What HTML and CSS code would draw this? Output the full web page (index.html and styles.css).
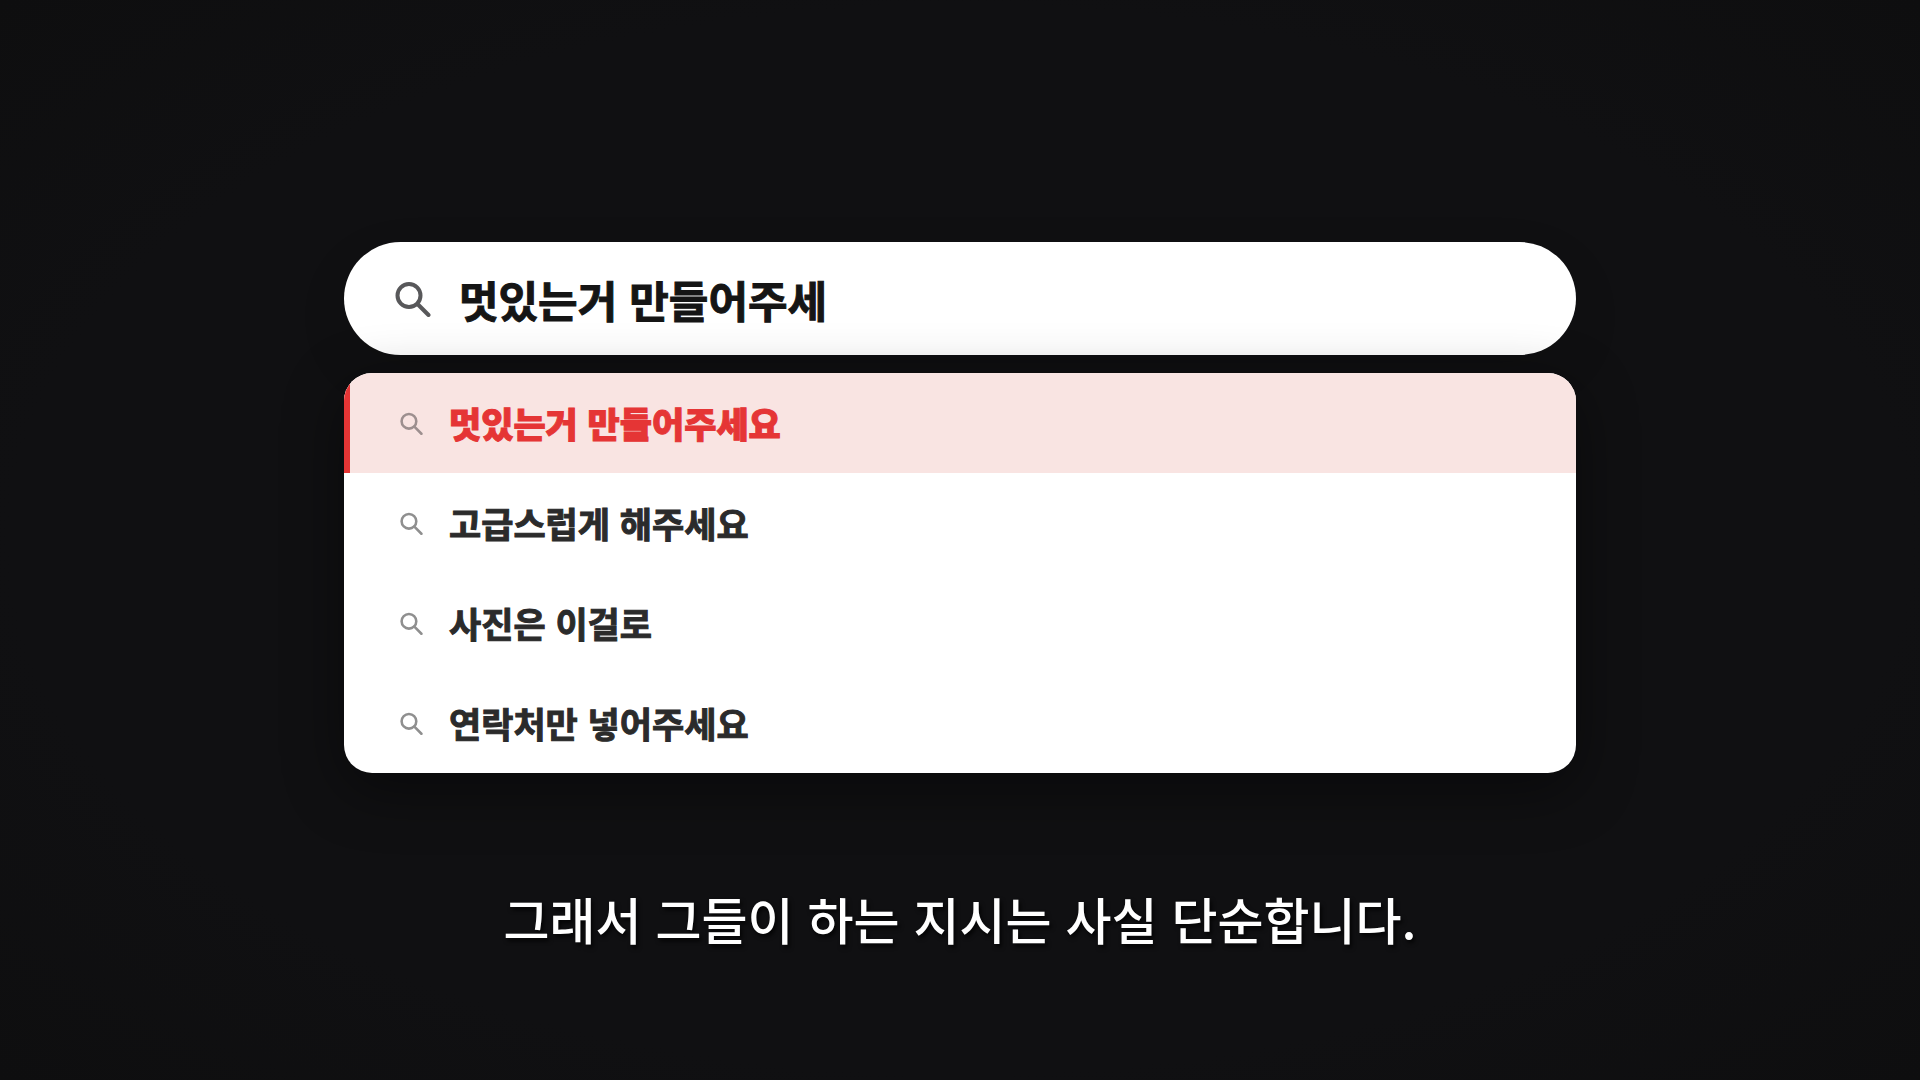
FILE: index.html
```html
<!DOCTYPE html>
<html lang="ko">
<head>
    <meta charset="UTF-8">
    <meta name="viewport" content="width=device-width, initial-scale=1.0">
    <title>검색</title>
    <link rel="stylesheet" href="styles.css">
</head>
<body>
    <svg class="sprite" aria-hidden="true">
        <symbol id="search-icon" viewBox="0 0 36 36">
            <circle cx="14" cy="14.5" r="11.5" fill="none" stroke="currentColor" stroke-width="4"/>
            <path d="M22.5 23L33.5 34" fill="none" stroke="currentColor" stroke-width="4" stroke-linecap="round"/>
        </symbol>
    </svg>
    <main class="search">
        <form class="search-bar">
            <label class="search-label" for="query" aria-label="검색">
                <svg class="icon"><use href="#search-icon"/></svg>
            </label>
            <input type="text" id="query" class="search-input" value="멋있는거 만들어주세" autocomplete="off">
        </form>
        <ul class="suggestions">
            <li>
                <button type="button" class="suggestion active">
                    <svg class="icon"><use href="#search-icon"/></svg>
                    <span>멋있는거 만들어주세요</span>
                </button>
            </li>
            <li>
                <button type="button" class="suggestion">
                    <svg class="icon"><use href="#search-icon"/></svg>
                    <span>고급스럽게 해주세요</span>
                </button>
            </li>
            <li>
                <button type="button" class="suggestion">
                    <svg class="icon"><use href="#search-icon"/></svg>
                    <span>사진은 이걸로</span>
                </button>
            </li>
            <li>
                <button type="button" class="suggestion">
                    <svg class="icon"><use href="#search-icon"/></svg>
                    <span>연락처만 넣어주세요</span>
                </button>
            </li>
        </ul>
    </main>
    <p class="caption">그래서 그들이 하는 지시는 사실 단순합니다.</p>
</body>
</html>
```
FILE: styles.css
```css
* {
    box-sizing: border-box;
}
body {
    margin: 0;
    min-height: 100vh;
    padding: 242px 24px 0;
    display: flex;
    flex-direction: column;
    align-items: center;
    font-family: "Noto Sans CJK KR", sans-serif;
    background: radial-gradient(ellipse at center, #101012 70%, #0e0e0f 100%);
}
.sprite {
    position: absolute;
    width: 0;
    height: 0;
}
.search {
    width: 100%;
    max-width: 1232px;
    display: flex;
    flex-direction: column;
    gap: 18px;
}
.search-bar {
    display: flex;
    align-items: center;
    gap: 28px;
    padding: 24px 51px;
    border-radius: 57px;
    background: #ffffff;
    box-shadow: 0 18px 50px rgba(0, 0, 0, 0.1);
}
.search-label {
    display: flex;
    color: #58585a;
}
.search-label .icon {
    width: 36px;
    height: 36px;
}
.search-input {
    flex: 1;
    min-width: 0;
    height: 65px;
    padding: 0;
    border: none;
    outline: none;
    background: transparent;
    font-family: inherit;
    font-size: 43px;
    font-weight: 700;
    color: #151515;
    -webkit-text-stroke: 1px currentColor;
}
.suggestions {
    margin: 0;
    padding: 0;
    list-style: none;
    border-radius: 28px;
    overflow: hidden;
    background: #ffffff;
    box-shadow: 0 16px 60px rgba(0, 0, 0, 0.45);
}
.suggestion {
    display: flex;
    align-items: center;
    gap: 26px;
    width: 100%;
    padding: 24px 56px;
    border: none;
    background: transparent;
    font-family: inherit;
    font-size: 35px;
    line-height: 52px;
    font-weight: 700;
    text-align: left;
    color: #2b2b2b;
    -webkit-text-stroke: 1px currentColor;
    cursor: pointer;
}
.suggestion .icon {
    width: 23px;
    height: 23px;
    color: #8f8f8f;
}
.suggestion.active {
    background: #f9e4e2;
    box-shadow: inset 6px 0 0 #e53535;
    color: #e53535;
    font-weight: 900;
}
.suggestion.active .icon {
    color: #9d8f8f;
}
.caption {
    margin: 108px 0 0;
    font-size: 50px;
    line-height: 74px;
    font-weight: 500;
    color: #ffffff;
    text-align: center;
    text-shadow: 2px 3px 4px rgba(0, 0, 0, 0.8);
}
```
